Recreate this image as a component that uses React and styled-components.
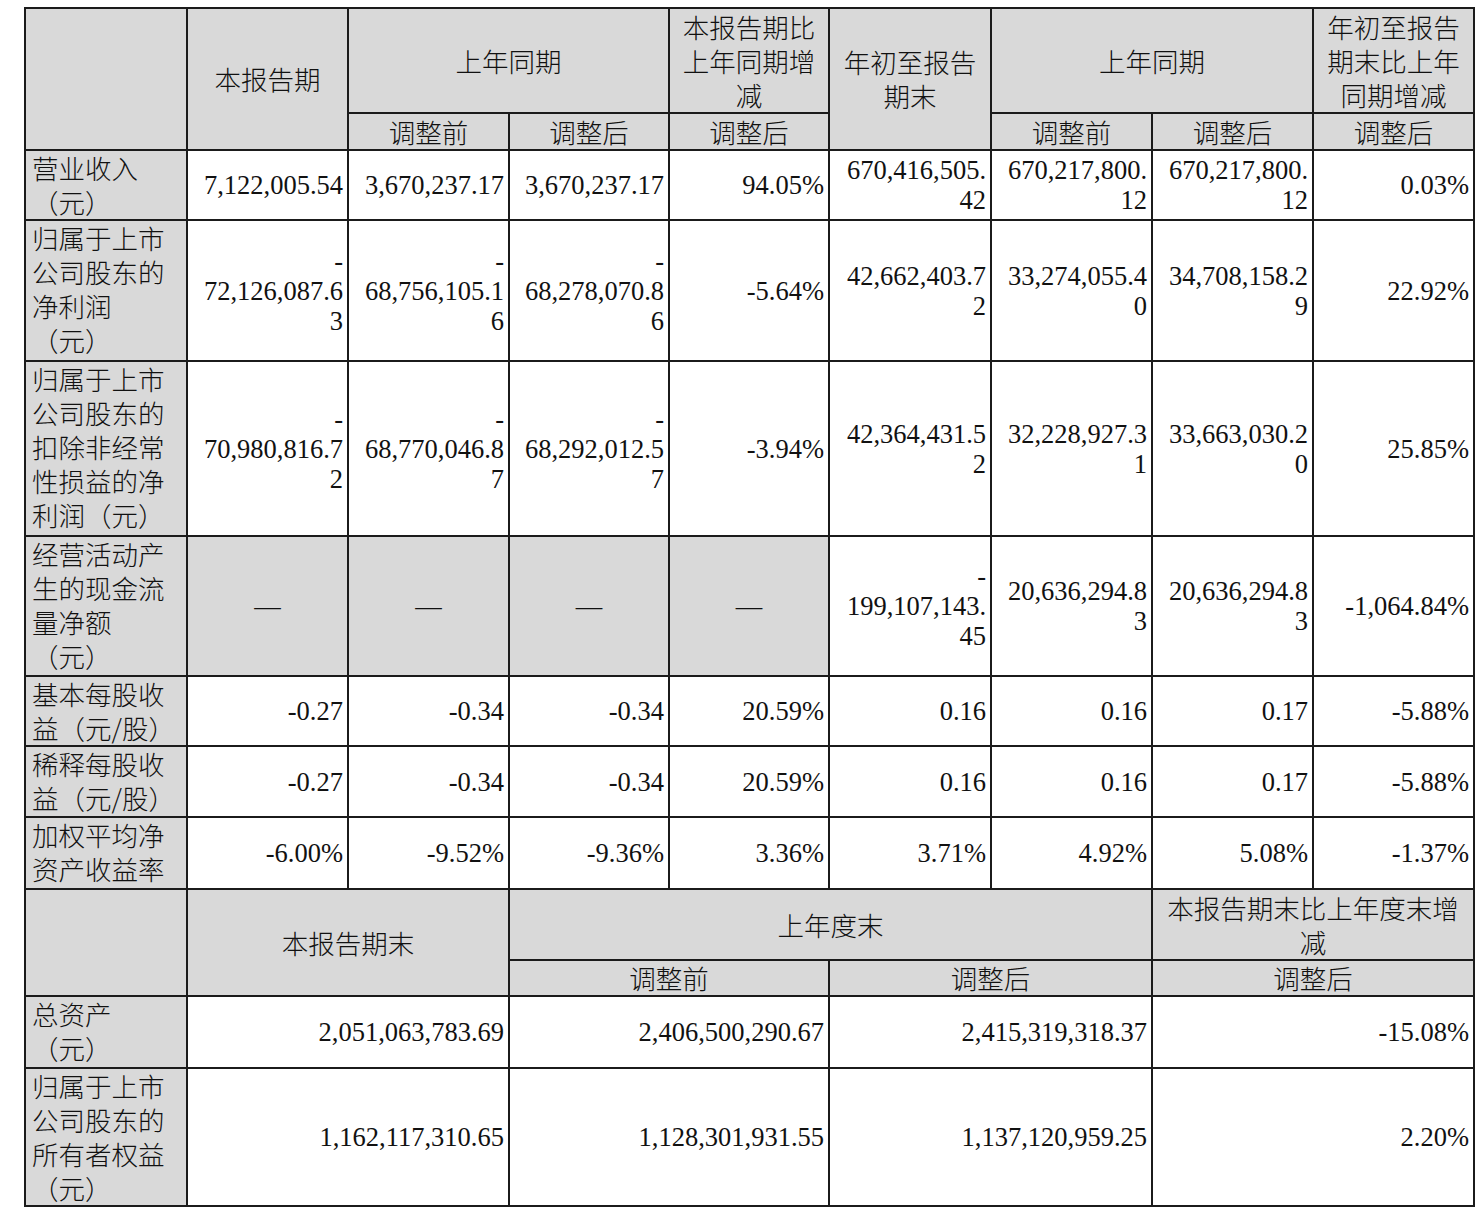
import React from 'react'
import styled, { createGlobalStyle, css } from 'styled-components'

const GlobalStyle = createGlobalStyle`
  html, body {
    margin: 0;
    padding: 0;
    background: #fff;
  }
  body {
    font-family: "Liberation Serif", "Noto Sans CJK SC", serif;
    color: #111;
  }
`

const Page = styled.div`
  padding: 7px 0 0 24px;
`

const Table = styled.table`
  border-collapse: collapse;
  table-layout: fixed;
  width: 1450px;
  font-size: 26.5px;
`

const Row = styled.tr`
  height: ${(p) => p.$h}px;
`

const Cell = styled.td`
  border: 2px solid #1b1b1b;
  padding: 0 3px;
  background: ${(p) => (p.$gray ? '#d9d9d9' : '#fff')};
  vertical-align: middle;
  font-weight: 400;

  ${(p) =>
    p.$kind === 'label' &&
    css`
      font-family: "Noto Sans CJK SC", "Liberation Serif", sans-serif;
      font-weight: 300;
      text-align: left;
      vertical-align: top;
      line-height: 34px;
      padding-left: 6px;
    `}
  ${(p) =>
    p.$kind === 'head' &&
    css`
      font-family: "Noto Sans CJK SC", "Liberation Serif", sans-serif;
      font-weight: 300;
      text-align: center;
      line-height: 34px;
    `}
  ${(p) =>
    p.$kind === 'num' &&
    css`
      text-align: right;
      line-height: 30px;
      padding-right: 4px;
    `}
  ${(p) =>
    p.$kind === 'dash' &&
    css`
      text-align: center;
      line-height: 30px;
    `}
`

const Line = styled.span`
  display: block;
  white-space: nowrap;
`

// "|" marks a line break inside a text, so "元/股" keeps its slash
const Lines = ({ text }) =>
  text.split('|').map((t, i) => <Line key={i}>{t}</Line>)

const colWidths = [162, 161, 161, 160, 160, 162, 161, 161, 161]

const rows = [
  {
    h: 69,
    label: '营业收入|（元）',
    values: ['7,122,005.54', '3,670,237.17', '3,670,237.17', '94.05%', '670,416,505.|42', '670,217,800.|12', '670,217,800.|12', '0.03%'],
  },
  {
    h: 141,
    label: '归属于上市|公司股东的|净利润|（元）',
    values: ['-|72,126,087.6|3', '-|68,756,105.1|6', '-|68,278,070.8|6', '-5.64%', '42,662,403.7|2', '33,274,055.4|0', '34,708,158.2|9', '22.92%'],
  },
  {
    h: 175,
    label: '归属于上市|公司股东的|扣除非经常|性损益的净|利润（元）',
    values: ['-|70,980,816.7|2', '-|68,770,046.8|7', '-|68,292,012.5|7', '-3.94%', '42,364,431.5|2', '32,228,927.3|1', '33,663,030.2|0', '25.85%'],
  },
  {
    h: 140,
    label: '经营活动产|生的现金流|量净额|（元）',
    values: ['—', '—', '—', '—', '-|199,107,143.|45', '20,636,294.8|3', '20,636,294.8|3', '-1,064.84%'],
  },
  {
    h: 70,
    label: '基本每股收|益（元/股）',
    values: ['-0.27', '-0.34', '-0.34', '20.59%', '0.16', '0.16', '0.17', '-5.88%'],
  },
  {
    h: 71,
    label: '稀释每股收|益（元/股）',
    values: ['-0.27', '-0.34', '-0.34', '20.59%', '0.16', '0.16', '0.17', '-5.88%'],
  },
  {
    h: 72,
    label: '加权平均净|资产收益率',
    values: ['-6.00%', '-9.52%', '-9.36%', '3.36%', '3.71%', '4.92%', '5.08%', '-1.37%'],
  },
]

const balanceRows = [
  {
    h: 72,
    label: '总资产|（元）',
    values: ['2,051,063,783.69', '2,406,500,290.67', '2,415,319,318.37', '-15.08%'],
  },
  {
    h: 138,
    label: '归属于上市|公司股东的|所有者权益|（元）',
    values: ['1,162,117,310.65', '1,128,301,931.55', '1,137,120,959.25', '2.20%'],
  },
]

const Head = ({ text, ...rest }) => (
  <Cell as="th" $kind="head" $gray {...rest}>
    <Lines text={text} />
  </Cell>
)

const Value = ({ text, span }) =>
  text === '—' ? (
    <Cell $kind="dash" $gray colSpan={span}>—</Cell>
  ) : (
    <Cell $kind="num" colSpan={span}>
      <Lines text={text} />
    </Cell>
  )

const Label = ({ text }) => (
  <Cell as="th" $kind="label" $gray>
    <Lines text={text} />
  </Cell>
)

const BodyRow = ({ row, span }) => (
  <Row $h={row.h}>
    <Label text={row.label} />
    {row.values.map((v, j) => (
      <Value key={j} text={v} span={span} />
    ))}
  </Row>
)

export default function App() {
  return (
    <>
      <GlobalStyle />
      <Page>
        <Table>
          <colgroup>
            {colWidths.map((w, i) => (
              <col key={i} style={{ width: w }} />
            ))}
          </colgroup>
          <tbody>
            <Row $h={105}>
              <Head text="" rowSpan={2} />
              <Head text="本报告期" rowSpan={2} />
              <Head text="上年同期" colSpan={2} />
              <Head text="本报告期比|上年同期增|减" />
              <Head text="年初至报告|期末" rowSpan={2} />
              <Head text="上年同期" colSpan={2} />
              <Head text="年初至报告|期末比上年|同期增减" />
            </Row>
            <Row $h={37}>
              <Head text="调整前" />
              <Head text="调整后" />
              <Head text="调整后" />
              <Head text="调整前" />
              <Head text="调整后" />
              <Head text="调整后" />
            </Row>
            {rows.map((r, i) => (
              <BodyRow key={i} row={r} />
            ))}
            <Row $h={71}>
              <Head text="" rowSpan={2} />
              <Head text="本报告期末" colSpan={2} rowSpan={2} />
              <Head text="上年度末" colSpan={4} />
              <Head text="本报告期末比上年度末增|减" colSpan={2} />
            </Row>
            <Row $h={36}>
              <Head text="调整前" colSpan={2} />
              <Head text="调整后" colSpan={2} />
              <Head text="调整后" colSpan={2} />
            </Row>
            {balanceRows.map((r, i) => (
              <BodyRow key={i} row={r} span={2} />
            ))}
          </tbody>
        </Table>
      </Page>
    </>
  )
}
